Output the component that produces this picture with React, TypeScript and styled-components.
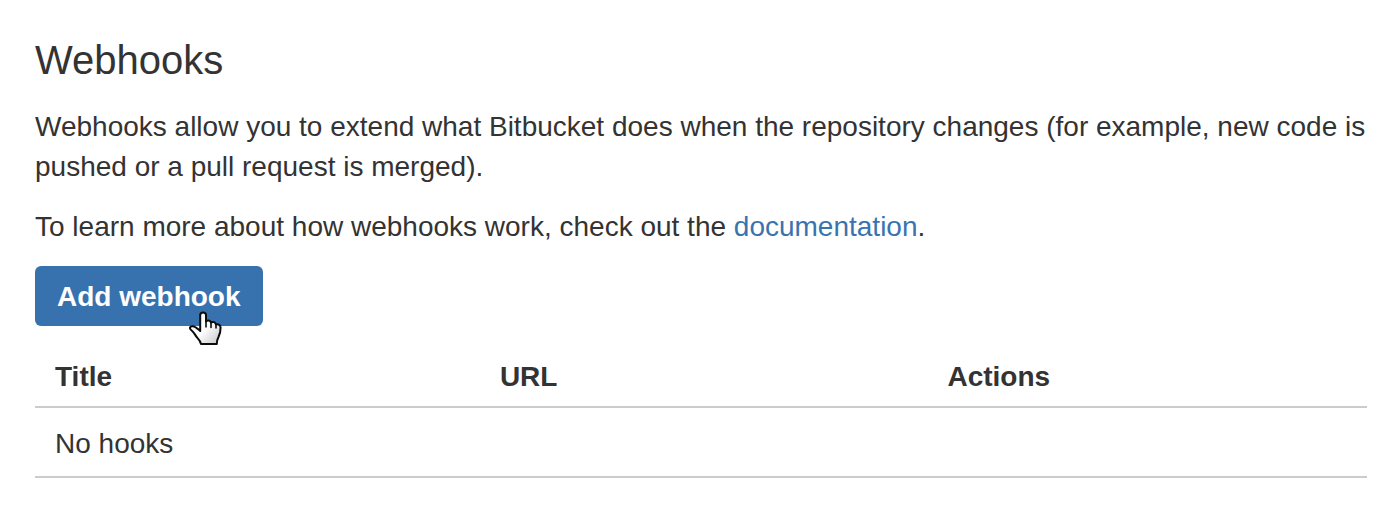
import React from 'react';
import styled, { createGlobalStyle } from 'styled-components';

const GlobalStyle = createGlobalStyle`
  *, *::before, *::after { box-sizing: border-box; }
  body {
    margin: 0;
    background: #ffffff;
    color: #333333;
    font-family: "Liberation Sans", Arial, sans-serif;
    font-size: 28px;
    line-height: 40px;
  }
`;

const Page = styled.main`
  padding: 36px 29px 48px 35px;
`;

const Heading = styled.h1`
  margin: 0;
  font-size: 40px;
  font-weight: 400;
  line-height: 48px;
`;

const Intro = styled.div`
  display: flex;
  flex-direction: column;
  gap: 20px;
  margin: 23px 0 19px;
`;

const Paragraph = styled.p`
  margin: 0;
`;

const Link = styled.a`
  color: #3b73af;
  text-decoration: none;
`;

const ButtonHolder = styled.div`
  position: relative;
  display: flex;
  width: fit-content;
`;

const PrimaryButton = styled.button`
  height: 60px;
  padding: 2px 22px 0;
  border: 0;
  border-radius: 6px;
  background: #3872ae;
  color: #ffffff;
  font: inherit;
  font-weight: 700;
  cursor: pointer;
`;

const Pointer = styled.svg`
  position: absolute;
  top: 44px;
  left: 154px;
  width: 34px;
  height: 38px;
  pointer-events: none;
`;

const HookTable = styled.table`
  width: 100%;
  margin-top: 20px;
  border-spacing: 0;
  table-layout: fixed;
`;

const HeadCell = styled.th<{ $width?: string }>`
  width: ${({ $width }) => $width ?? 'auto'};
  height: 62px;
  padding: 11px 20px 9px;
  border-bottom: 2px solid #cccccc;
  text-align: left;
  font-weight: 700;
`;

const Cell = styled.td`
  height: 70px;
  padding: 16px 20px 12px;
  border-bottom: 2px solid #cccccc;
`;

export default function App() {
  return (
    <>
      <GlobalStyle />
      <Page>
        <Heading>Webhooks</Heading>
        <Intro>
          <Paragraph>
            Webhooks allow you to extend what Bitbucket does when the repository changes (for
            example, new code is pushed or a pull request is merged).
          </Paragraph>
          <Paragraph>
            To learn more about how webhooks work, check out the{' '}
            <Link href="#documentation">documentation</Link>.
          </Paragraph>
        </Intro>
        <ButtonHolder>
          <PrimaryButton type="button">Add webhook</PrimaryButton>
          <Pointer viewBox="9 10 34 38" aria-hidden="true">
            <defs>
              <linearGradient id="glove" x1="0" y1="0" x2="1" y2="1">
                <stop offset="0.5" stopColor="#ffffff" />
                <stop offset="1" stopColor="#c4c4c4" />
              </linearGradient>
            </defs>
            <path
              d="M20.2 31V15C20.2 11.5 26 11.5 26 15V21.5C27 19.8 30.6 20.2 31 22.6C33 21.2 35.6 22.2 36 24.6C38.2 23.8 40.6 25 40.6 27.5C40.6 31 40 34 38.5 37C37.4 39 36.8 41 36.8 44H21C20.6 41.8 18.8 39.4 17 37.4C15 35.2 14.4 32.6 11.4 30.2C8.8 28 10 26 12.6 26.2C15.8 26.5 17.6 28.6 20.2 31Z"
              fill="url(#glove)"
              stroke="#0c0c0c"
              strokeWidth="2"
              strokeLinejoin="round"
            />
            <path
              d="M26 21V27M31 22.5V27.5M36 24.5V28"
              fill="none"
              stroke="#0c0c0c"
              strokeWidth="1.6"
              strokeLinecap="round"
            />
          </Pointer>
        </ButtonHolder>
        <HookTable>
          <thead>
            <tr>
              <HeadCell scope="col" $width="33.4%">Title</HeadCell>
              <HeadCell scope="col" $width="33.6%">URL</HeadCell>
              <HeadCell scope="col">Actions</HeadCell>
            </tr>
          </thead>
          <tbody>
            <tr>
              <Cell colSpan={3}>No hooks</Cell>
            </tr>
          </tbody>
        </HookTable>
      </Page>
    </>
  );
}
